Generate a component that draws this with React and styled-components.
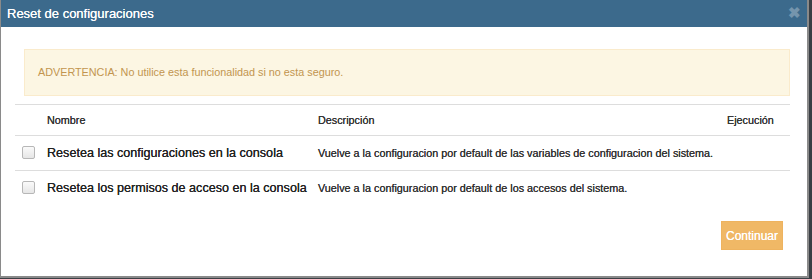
import React from 'react'
import styled, { createGlobalStyle } from 'styled-components'

const GlobalStyle = createGlobalStyle`
    html, body {
        margin: 0;
        padding: 0;
        background: #3a3f44;
        font-family: 'Liberation Sans', Arial, sans-serif;
        overflow: hidden;
    }
`;

const Modal = styled.div`
    width: 806px;
    height: 276px;
    background: #fff;
    border-left: 1px solid #8a8a8a;
    border-right: 2px solid #8a8a8a;
    border-bottom: 2px solid #8a8a8a;
    display: flex;
    flex-direction: column;
`;

const Header = styled.div`
    height: 27px;
    background: #3c6a8c;
    display: flex;
    align-items: center;
    justify-content: space-between;
    padding: 0 6px 1px 6px;
    box-sizing: border-box;
`;

const Title = styled.h4`
    margin: 0;
    color: #fff;
    font-size: 13px;
    font-weight: 400;
    text-shadow: 0 0 0.4px #fff;
`;

const Close = styled.span`
    color: #7595ad;
    font-size: 15px;
    font-weight: 700;
    line-height: 1;
    margin-top: -1px;
`;

const Body = styled.div`
    padding: 22px 17px 0 14px;
    display: flex;
    flex-direction: column;
    flex: 1;
`;

const Alert = styled.div`
    margin: 0 0 8px 9px;
    height: 47px;
    box-sizing: border-box;
    background: #fcf6e3;
    border: 1px solid #faebcc;
    color: #c2954f;
    font-size: 10.8px;
    display: flex;
    align-items: center;
    padding: 0 13px 1px;
`;

const Table = styled.div`
    display: grid;
    grid-template-columns: 32px 271px 409px 63px;
    border-top: 1px solid #ddd;
`;

const Cell = styled.div`
    height: ${p => (p.$head ? 29 : 33)}px;
    display: flex;
    align-items: center;
    border-bottom: ${p => (p.$last ? 'none' : '1px solid #ddd')};
    color: ${p => (p.$strong ? '#222' : '#333')};
    font-size: ${p => (p.$strong ? 12.6 : 10.8)}px;
    text-shadow: ${p => (p.$strong ? '0 0 0.5px #222' : '0 0 0.2px #333')};
    white-space: nowrap;
    padding-bottom: 1px;
`;

const Check = styled.span`
    width: 11px;
    height: 11px;
    margin-left: 7px;
    border: 1px solid #b7b7b7;
    border-radius: 2px;
    background: linear-gradient(#fafafa, #e6e6e6);
`;

const Footer = styled.div`
    display: flex;
    justify-content: flex-end;
    padding: 16px 7px 0 0;
`;

const Button = styled.button`
    width: 62px;
    height: 29px;
    background: #f0b866;
    border: 1px solid #eeb35f;
    color: #fff;
    font-family: inherit;
    font-size: 12px;
    text-shadow: 0 0 0.4px #fff;
    padding: 0;
`;

const rows = [
    ['Resetea las configuraciones en la consola', 'Vuelve a la configuracion por default de las variables de configuracion del sistema.'],
    ['Resetea los permisos de acceso en la consola', 'Vuelve a la configuracion por default de los accesos del sistema.'],
];

const App = () => {
    return (
        <>
            <GlobalStyle />
            <Modal>
                <Header>
                    <Title>Reset de configuraciones</Title>
                    <Close>✖</Close>
                </Header>
                <Body>
                    <Alert>ADVERTENCIA: No utilice esta funcionalidad si no esta seguro.</Alert>
                    <Table>
                        <Cell $head />
                        <Cell $head>Nombre</Cell>
                        <Cell $head>Descripción</Cell>
                        <Cell $head>Ejecución</Cell>
                        {rows.map(([name, desc], i) => {
                            const last = i === rows.length - 1
                            return (
                                <React.Fragment key={name}>
                                    <Cell $last={last}><Check /></Cell>
                                    <Cell $last={last} $strong>{name}</Cell>
                                    <Cell $last={last}>{desc}</Cell>
                                    <Cell $last={last} />
                                </React.Fragment>
                            )
                        })}
                    </Table>
                    <Footer>
                        <Button>Continuar</Button>
                    </Footer>
                </Body>
            </Modal>
        </>
    )
}

export default App
